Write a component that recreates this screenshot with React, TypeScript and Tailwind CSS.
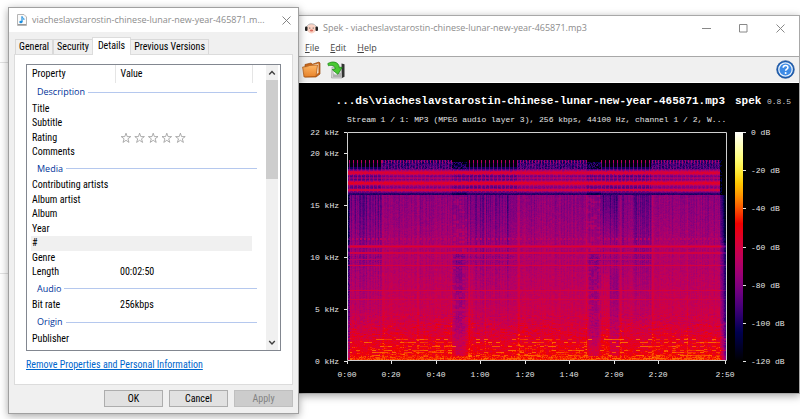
import { ReactNode } from 'react';

const PLOT_W = 378;
const PLOT_H = 228;
const LEVELS = 64;

// one entry per row of the details list; `group` starts a new section
const DETAILS: { name: string; value?: string; group?: boolean }[] = [
  { name: 'Description', group: true },
  { name: 'Title' },
  { name: 'Subtitle' },
  { name: 'Rating', value: 'stars' },
  { name: 'Comments' },
  { name: 'Media', group: true },
  { name: 'Contributing artists' },
  { name: 'Album artist' },
  { name: 'Album' },
  { name: 'Year' },
  { name: '#' },
  { name: 'Genre' },
  { name: 'Length', value: '00:02:50' },
  { name: 'Audio', group: true },
  { name: 'Bit rate', value: '256kbps' },
  { name: 'Origin', group: true },
  { name: 'Publisher' },
];

const FREQ_TICKS = [
  { label: '22 kHz', y: 49 },
  { label: '20 kHz', y: 70 },
  { label: '15 kHz', y: 122 },
  { label: '10 kHz', y: 174 },
  { label: '5 kHz', y: 226 },
  { label: '0 kHz', y: 278 },
];

const TIME_TICKS = [
  { label: '0:00', x: 48 },
  { label: '0:20', x: 92 },
  { label: '0:40', x: 137 },
  { label: '1:00', x: 181 },
  { label: '1:20', x: 226 },
  { label: '1:40', x: 270 },
  { label: '2:00', x: 315 },
  { label: '2:20', x: 359 },
  { label: '2:50', x: 426 },
];

const DB_TICKS = ['0 dB', '-20 dB', '-40 dB', '-60 dB', '-80 dB', '-100 dB', '-120 dB'];

function sox(l: number) {
  let r = 0;
  let g = 0;
  let b = 0;
  if (l >= 0.13 && l < 0.73) r = Math.sin(((l - 0.13) / 0.6) * (Math.PI / 2));
  else if (l >= 0.73) r = 1;
  if (l >= 0.6 && l < 0.91) g = Math.sin(((l - 0.6) / 0.31) * (Math.PI / 2));
  else if (l >= 0.91) g = 1;
  if (l < 0.6) b = 0.5 * Math.sin((l / 0.6) * Math.PI);
  else if (l >= 0.78) b = (l - 0.78) / 0.22;
  return `rgb(${Math.round(r * 255)},${Math.round(g * 255)},${Math.round(b * 255)})`;
}

function noise(x: number, y: number) {
  const n = Math.sin(x * 127.1 + y * 311.7) * 43758.5453;
  return n - Math.floor(n);
}

const inside = (v: number, a: number, b: number) => v >= a && v < b;

// average level by row, y = 0 is 22 kHz
const CURVE = [
  [62, 0.36], [80, 0.37], [100, 0.395], [115, 0.42], [140, 0.44], [165, 0.465],
  [185, 0.49], [200, 0.52], [208, 0.55], [218, 0.58], [228, 0.62],
];

function base(y: number) {
  for (let i = 1; i < CURVE.length; i++) {
    const [y0, l0] = CURVE[i - 1];
    const [y1, l1] = CURVE[i];
    if (y <= y1) return l0 + ((l1 - l0) * Math.max(0, y - y0)) / (y1 - y0);
  }
  return 0.62;
}

const TONES: Record<number, number> = {
  112: 0.47, 113: 0.53, 114: 0.47, 119: 0.5, 120: 0.5, 126: 0.44, 132: 0.51, 157: 0.51, 166: 0.5,
};

const BANDS: Record<number, number> = {
  36: 0.33, 37: 0.41, 38: 0.48, 39: 0.52, 40: 0.52, 41: 0.46, 42: 0.37, 43: 0.34, 44: 0.41, 45: 0.42,
  46: 0.35, 47: 0.4, 48: 0.47, 49: 0.53, 50: 0.54, 51: 0.5, 52: 0.42, 53: 0.37, 54: 0.35, 55: 0.39,
  56: 0.49, 57: 0.5, 58: 0.39, 59: 0.29, 60: 0.2, 61: 0.18,
};

const BEATS = [35, 36, 69, 70, 103, 121, 137, 170, 171, 204, 238, 272, 273, 304, 305, 339];

function level(x: number, y: number) {
  if (y < 27) return 0;
  const n = noise(x, y) - 0.5;
  const col = noise(x, 7) - 0.5;
  const sparse = x < 34 || inside(x, 119, 169) || inside(x, 253, 303);
  const quiet = inside(x, 104, 119) || inside(x, 239, 253);
  const onBeat = x % 4 === 1;

  if (x > 371 && y < 62) return x < 374 && n > 0.1 ? 0.12 : 0;
  if (y < 36) {
    if (quiet) return y > 28 ? 0.12 + n * 0.25 : 0;
    if (sparse) return onBeat ? (y < 30 ? 0.44 : 0.3) : y > 33 ? 0.14 : 0.02;
    if (y < 30) return x % 3 === 1 ? 0.42 : 0.2 + n * 0.15;
    return (x % 3 === 1 ? 0.3 : 0.21) + n * 0.14;
  }
  if (y < 62) {
    let l = BANDS[y] + n * 0.05;
    if (l < 0.46 && y < 59) l += onBeat ? 0.04 : sparse ? -0.08 : -0.02;
    if (quiet && l < 0.44) l -= 0.05;
    return l;
  }

  let l = base(y);
  const high = Math.max(0, 1 - (y - 62) / 150);
  l += n * (y > 180 ? 0.05 : 0.035) + col * (0.02 + high * 0.04);
  l += (noise(Math.floor(x / 3), y + 900) - 0.5) * (y > 180 ? 0.06 : 0.025);
  if (x % 3 === 0) l -= 0.02 * high;
  if (sparse) {
    l -= 0.01 + high * 0.02;
    if (!onBeat && col < 0) l -= 0.05 * high;
    if (inside(x, 253, 270)) l -= 0.06 * Math.max(0, 1 - (y - 62) / 45);
    if (inside(x, 4, 26) && y < 180) l -= 0.015;
    if (x === 154 || x === 159) l -= 0.06 * high;
  }
  if (quiet) {
    const edge = Math.min(x < 200 ? x - 103 : x - 238, x < 200 ? 119 - x : 253 - x);
    l -= y > 120 ? Math.min(0.09, 0.02 * edge) : 0.015 + n * 0.06;
    if (y < 190 && noise(Math.floor(x / 3), Math.floor(y / 2)) > 0.72) l += 0.045;
  }
  if (inside(x, 262, 271) && y > 132) l -= 0.06 * Math.min(1, (y - 132) / 12) * (x % 2 ? 1 : 0.7);
  if (inside(x, 254, 261) && y > 140) l += 0.025;
  if (inside(x, 120, 125) && y > 132) l += 0.025;
  if (BEATS.includes(x)) l += 0.035;

  if (inside(y, 105, 107) && x % 4 < 2) l = Math.max(l, quiet ? 0.38 : 0.45);
  if (inside(y, 123, 130) && (sparse || quiet) && n > 0.2) l -= 0.05;
  if (TONES[y]) l = Math.max(l, TONES[y] + n * 0.025);

  // dashed overtones near the bottom
  if (y >= 190) {
    const dash = noise(Math.floor(x / 4), y + 50);
    const strong = [206, 209, 213, 217, 219, 222, 225].includes(y);
    if (strong && dash > (quiet ? 0.9 : sparse ? 0.75 : 0.5)) l = 0.63 + (dash - 0.5) * 0.12;
    else if (dash > 0.85 && !quiet) l += 0.05;
  }
  if (y > 222) l = Math.max(l, 0.61 + n * 0.12);
  if (y === 226) l = 0.65 + n * 0.08;
  if (x < 2) l -= 0.16 + n * 0.15;
  if (x > 371) l -= (x - 371) * (y < 110 ? 0.055 : 0.045);
  return Math.max(0, l);
}

// neighbouring cells of the same level are joined into runs, one path per level
function buildSpectrogram() {
  const paths: string[] = Array(LEVELS).fill('');
  for (let y = 27; y < PLOT_H; y++) {
    let start = 0;
    let current = Math.round(level(0, y) * (LEVELS - 1));
    for (let x = 1; x <= PLOT_W; x++) {
      const next = x < PLOT_W ? Math.round(level(x, y) * (LEVELS - 1)) : -1;
      if (next === current) continue;
      if (current > 0) paths[current] += `M${start} ${y}h${x - start}v1H${start}z`;
      start = x;
      current = next;
    }
  }
  return paths;
}

const SPECTROGRAM = buildSpectrogram();

function Tab({ active, children }: { active?: boolean; children: ReactNode }) {
  return (
    <button
      type="button"
      role="tab"
      aria-selected={!!active}
      className={
        active
          ? 'relative -mx-px -mb-px h-[18px] border border-b-0 border-[#dcdcdc] bg-white px-[5px] pb-[2px]'
          : 'h-[15px] border border-b-0 border-[#d9d9d9] bg-[#f0f0f0] px-[3px]'
      }
    >
      {children}
    </button>
  );
}

function Stars() {
  return (
    <svg width="68" height="12" viewBox="0 0 68 12" fill="none" stroke="#999" strokeWidth="0.8">
      {[0, 1, 2, 3, 4].map((i) => (
        <path
          key={i}
          transform={`translate(${i * 13.6} 0)`}
          d="M6 1.2l1.2 3.4h3.6L7.9 6.8l1.1 3.6L6 8.300l-3 2.100 1.100-3.600L1.200 4.600h3.600z"
        />
      ))}
    </svg>
  );
}

function PropertiesDialog() {
  return (
    <section className="relative flex w-[291px] shrink-0 flex-col border border-[#a0a0a0] bg-[#f0f0f0] font-['Roboto_Condensed','Roboto',sans-serif] text-[10px] leading-[12px] text-black shadow-[0_2px_8px_rgba(0,0,0,0.35)]">
      <header className="flex h-[24px] items-center bg-white pl-[8px] pr-[7px] font-['Open_Sans',sans-serif] text-[9px] text-[#8c8c8c]">
        <svg width="10" height="12" viewBox="0 0 10 12" className="mr-[5px] shrink-0">
          <path d="M.5.500h6.500l2.500 2.500v8.500h-9z" fill="#fafafa" stroke="#b5b5b5" />
          <path d="M5 2.500v5.500" stroke="#1b8fe0" strokeWidth="1.200" />
          <path d="M5 2.500c.5 1.500 2.500 1.500 1.900 3.500" stroke="#1b8fe0" fill="none" />
          <ellipse cx="3.900" cy="8" rx="1.600" ry="1.200" fill="#1b8fe0" />
          <path d="M1 10.500h8" stroke="#999" />
        </svg>
        <h1 className="flex-1 whitespace-nowrap">viacheslavstarostin-chinese-lunar-new-year-465871.m...</h1>
        <button type="button" aria-label="Close">
          <svg width="9" height="9" viewBox="0 0 9 9" stroke="#777" strokeWidth="0.9">
            <path d="M.5.5l8 8M8.500.5l-8 8" />
          </svg>
        </button>
      </header>

      <div role="tablist" className="mt-[5px] flex items-end pl-[6px]">
        <Tab>General</Tab>
        <Tab>Security</Tab>
        <Tab active>Details</Tab>
        <Tab>Previous Versions</Tab>
      </div>

      <div className="mx-[5px] border border-[#dcdcdc] bg-white px-[11px] pb-[13px] pt-[9px]">
        <div className="flex h-[287px] border border-[#828790]">
          <div className="flex-1 overflow-hidden pl-[4px]">
            <table className="h-[281px] w-full table-fixed border-collapse whitespace-nowrap text-left">
              <colgroup>
                <col className="w-[84px]" />
                <col className="w-[137px]" />
                <col />
              </colgroup>
              <thead>
                <tr className="h-[18px]">
                  <th className="border-r border-[#e5e5e5] p-0 pl-px font-normal">Property</th>
                  <th className="border-r border-[#e5e5e5] p-0 pl-[5px] font-normal">Value</th>
                  <th className="p-0" />
                </tr>
              </thead>
              <tbody>
                {DETAILS.map((d) =>
                  d.group ? (
                    <tr key={d.name} className="h-[18px]">
                      <th colSpan={3} className="p-0 pl-[6px] font-normal">
                        <div className="mr-[9px] flex items-center gap-[3px] font-['Open_Sans',sans-serif] text-[9px] text-[#003399]">
                          {d.name}
                          <span className="h-px flex-1 bg-[#b5c8ee]" />
                        </div>
                      </th>
                    </tr>
                  ) : (
                    <tr key={d.name} className="h-[14px]">
                      <td className={d.name === '#' ? 'bg-[#f0f0f0] p-0 pl-px' : 'p-0 pl-px'}>{d.name}</td>
                      <td className={d.name === '#' ? 'bg-[#f0f0f0] p-0 pl-[5px]' : 'p-0 pl-[5px]'}>
                        {d.value === 'stars' ? <Stars /> : d.value}
                      </td>
                      <td className="p-0" />
                    </tr>
                  ),
                )}
              </tbody>
            </table>
          </div>
          <div className="mr-[2px] flex w-[12px] flex-col items-center bg-[#f0f0f0]">
            <svg width="12" height="15" viewBox="0 0 12 15" fill="none" stroke="#404040" strokeWidth="1.400">
              <path d="M3.200 9.500L6 6.500l2.800 3" />
            </svg>
            <div className="h-[99px] w-full bg-[#cdcdcd]" />
            <svg width="12" height="15" viewBox="0 0 12 15" fill="none" stroke="#404040" strokeWidth="1.400" className="mt-auto">
              <path d="M3.200 6L6 9l2.800-3" />
            </svg>
          </div>
        </div>
        <a href="#remove" className="mt-[8px] block w-fit text-[#0066cc] underline">
          Remove Properties and Personal Information
        </a>
      </div>

      <footer className="mb-[6px] mt-[5px] flex justify-end gap-[6px] pr-[5px]">
        <button type="button" className="h-[17px] w-[59px] border border-[#adadad] bg-[#e1e1e1]">OK</button>
        <button type="button" className="h-[17px] w-[59px] border border-[#adadad] bg-[#e1e1e1]">Cancel</button>
        <button type="button" disabled className="h-[17px] w-[59px] border border-[#bfbfbf] bg-[#cccccc] text-[#838383]">Apply</button>
      </footer>
    </section>
  );
}

function SpekChart() {
  return (
    <svg
      width="500"
      height="310"
      viewBox="0 0 500 310"
      className="block font-['Liberation_Mono',monospace] text-[8px]"
      fill="#e6e6e6"
      role="img"
      aria-label="Spectrogram"
    >
      <defs>
        <linearGradient id="scale" x1="0" y1="1" x2="0" y2="0">
          {Array.from({ length: 41 }, (_, i) => (
            <stop key={i} offset={i / 40} stopColor={sox(i / 40)} />
          ))}
        </linearGradient>
      </defs>

      <text x="426" y="21" textAnchor="end" className="text-[11px] font-bold" fill="#fff">
        ...ds\viacheslavstarostin-chinese-lunar-new-year-465871.mp3
      </text>
      <text x="436" y="21" className="text-[11px] font-bold" fill="#fff">spek</text>
      <text x="468" y="21" fill="#ccc">0.8.5</text>
      <text x="48" y="39">Stream 1 / 1: MP3 (MPEG audio layer 3), 256 kbps, 44100 Hz, channel 1 / 2, W...</text>

      <g transform="translate(49 50)" shapeRendering="crispEdges">
        {SPECTROGRAM.map((d, i) => d && <path key={i} d={d} fill={sox(i / (LEVELS - 1))} />)}
      </g>
      <path d="M48.500 277.500V49.500H427.500V277.500z" fill="none" stroke="#d0d0d0" />

      {FREQ_TICKS.map((t) => (
        <g key={t.label}>
          <path d={`M45 ${t.y + 0.5}h3`} stroke="#e6e6e6" />
          <text x="40" y={t.y + 3} textAnchor="end">{t.label}</text>
        </g>
      ))}
      {TIME_TICKS.map((t) => (
        <g key={t.label}>
          <path d={`M${t.x + 0.5} 278v3`} stroke="#e6e6e6" />
          <text x={t.x} y="294" textAnchor="middle">{t.label}</text>
        </g>
      ))}

      <rect x="436" y="49" width="8" height="229" fill="url(#scale)" />
      {DB_TICKS.map((label, i) => (
        <g key={label}>
          <path d={`M444 ${Math.round(49 + i * 38.2) + 0.5}h3`} stroke="#e6e6e6" />
          <text x="452" y={Math.round(49 + i * 38.2) + 3}>{label}</text>
        </g>
      ))}
    </svg>
  );
}

function SpekWindow() {
  return (
    <section className="mt-[8px] min-w-0 flex-1 self-start overflow-hidden border border-l-0 border-[#a8a8a8] bg-white font-['Open_Sans',sans-serif] text-[9px] leading-[12px] shadow-[0_2px_8px_rgba(0,0,0,0.35)]">
      <header className="flex h-[24px] items-center pl-[6px] pr-[14px] text-[#8c8c8c]">
        <svg width="13" height="11" viewBox="0 0 13 11" className="mr-[5px]">
          <ellipse cx="6.500" cy="5.800" rx="4.600" ry="4.700" fill="#fbd3c4" />
          <path d="M1.500 4.500C2.500-.4 10.500-.4 11.500 4.500" fill="none" stroke="#999" strokeWidth=".7" />
          <rect x="0" y="3.500" width="2.500" height="4.500" rx="1.100" fill="#222" />
          <rect x="10.500" y="3.500" width="2.500" height="4.500" rx="1.100" fill="#222" />
          <circle cx="4.800" cy="5" r=".6" fill="#333" />
          <circle cx="8.200" cy="5" r=".6" fill="#333" />
          <ellipse cx="6.500" cy="7.600" rx="1.700" ry="1" fill="#d96b5c" />
        </svg>
        <h2 className="flex-1 whitespace-nowrap">Spek - viacheslavstarostin-chinese-lunar-new-year-465871.mp3</h2>
        <div className="flex items-center gap-[28px]">
          <button type="button" aria-label="Minimize">
            <svg width="9" height="9" viewBox="0 0 9 9" stroke="#888"><path d="M0 4.500h9" /></svg>
          </button>
          <button type="button" aria-label="Maximize">
            <svg width="9" height="9" viewBox="0 0 9 9" fill="none" stroke="#888"><path d="M.5.500h7.500v7.500h-7.500z" /></svg>
          </button>
          <button type="button" aria-label="Close">
            <svg width="9" height="9" viewBox="0 0 9 9" stroke="#888"><path d="M.5.500l8 8M8.500.500l-8 8" /></svg>
          </button>
        </div>
      </header>

      <nav className="flex h-[17px] items-center gap-[11px] border-b border-[#a8a8a8] pl-[6px] text-[#444]">
        <button type="button"><u>F</u>ile</button>
        <button type="button"><u>E</u>dit</button>
        <button type="button"><u>H</u>elp</button>
      </nav>

      <div className="flex h-[26px] items-center border-b border-white bg-[#f0f0f0] pl-[3px] pr-[4px]">
        <button type="button" aria-label="Open">
          <svg width="19" height="17" viewBox="0 0 19 17">
            <defs>
              <linearGradient id="folder" x1="0" y1="0" x2="0" y2="1">
                <stop offset="0" stopColor="#ffb766" />
                <stop offset="1" stopColor="#e8832a" />
              </linearGradient>
            </defs>
            <path d="M3 3.500L9 2l1.500 1.200L17 1l1 1v11l-4 3H3z" fill="#c8661a" stroke="#9a4a10" strokeWidth=".7" />
            <path d="M4 5.500l12.500-3v9L14 14z" fill="#f5e4cf" />
            <path d="M.6 6l5-.5L7 4.600l8.500-.6L14 15.500 2 16z" fill="url(#folder)" stroke="#a9530f" strokeWidth=".7" />
          </svg>
        </button>
        <button type="button" aria-label="Save" className="ml-[6px]">
          <svg width="19" height="18" viewBox="0 0 19 18">
            <path d="M5 6h10v11H4.500z" fill="#d4d4d4" stroke="#999" strokeWidth=".6" />
            <path d="M14.500 2.500l3 .8v12.500L15 17z" fill="#333" />
            <path d="M6 13h8M6 15h8" stroke="#8d8d8d" />
            <circle cx="9" cy="11" r="3" fill="#eee" stroke="#aaa" strokeWidth=".5" />
            <path d="M.8 2.600C5-.2 12 .4 12.300 6.800l2.900-.4-4.300 6.900-5.700-4.700 3-.6C8 4.700 5 3.600 1.500 4.800z" fill="#49c832" stroke="#208a1b" strokeWidth=".8" />
          </svg>
        </button>
        <button type="button" aria-label="Help" className="ml-auto">
          <svg width="19" height="19" viewBox="0 0 19 19">
            <circle cx="9.500" cy="9.500" r="8.800" fill="#1b5fb4" stroke="#174b92" strokeWidth=".7" />
            <circle cx="9.500" cy="9.500" r="6.700" fill="#3d8be6" stroke="#e6f0fc" strokeWidth="1.300" />
            <path d="M7.200 7.800c0-3 4.700-3 4.700-.3 0 1.700-2.200 1.500-2.200 3.300" fill="none" stroke="#fff" strokeWidth="1.600" />
            <circle cx="9.600" cy="13" r="1" fill="#fff" />
          </svg>
        </button>
      </div>

      <div className="bg-black">
        <SpekChart />
      </div>
    </section>
  );
}

export default function App() {
  return (
    <main className="relative min-h-screen overflow-hidden bg-white">
      {/* edges of the page behind the windows */}
      <div className="absolute left-0 top-[62px] h-[212px] w-[9px] border-y border-[#e2e2e2]" />
      <div className="flex items-start pl-[8px] pt-[7px]">
        <PropertiesDialog />
        <SpekWindow />
      </div>
    </main>
  );
}
